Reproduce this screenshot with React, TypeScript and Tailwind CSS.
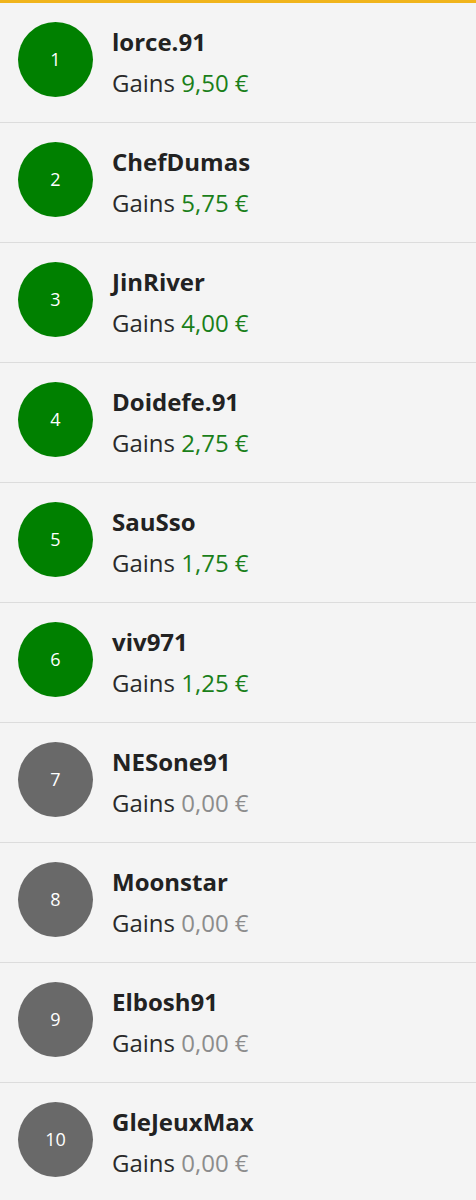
import React from "react";

type Player = {
  rank: number;
  name: string;
  gains: string;
};

const players: Player[] = [
  { rank: 1, name: "lorce.91", gains: "9,50 €" },
  { rank: 2, name: "ChefDumas", gains: "5,75 €" },
  { rank: 3, name: "JinRiver", gains: "4,00 €" },
  { rank: 4, name: "Doidefe.91", gains: "2,75 €" },
  { rank: 5, name: "SauSso", gains: "1,75 €" },
  { rank: 6, name: "viv971", gains: "1,25 €" },
  { rank: 7, name: "NESone91", gains: "0,00 €" },
  { rank: 8, name: "Moonstar", gains: "0,00 €" },
  { rank: 9, name: "Elbosh91", gains: "0,00 €" },
  { rank: 10, name: "GleJeuxMax", gains: "0,00 €" },
];

const PlayerRow: React.FC<{ item: Player }> = ({ item }) => {
  const won = item.gains !== "0,00 €";
  return (
    <div className="flex items-start h-[120px] border-b border-[#dcdcdc] px-[18px]">
      <div
        className={
          won
            ? "mt-[19px] w-[75px] h-[75px] rounded-full bg-[#008000] flex items-center justify-center text-white text-[18px] shrink-0"
            : "mt-[19px] w-[75px] h-[75px] rounded-full bg-[#696969] flex items-center justify-center text-white text-[18px] shrink-0"
        }
      >
        {item.rank}
      </div>
      <div className="ml-[19px] mt-[24px] flex flex-col">
        <span className="text-[24px] font-bold text-[#222] leading-[30px]">
          {item.name}
        </span>
        <span className="text-[24px] text-[#2a2a2a] leading-[30px] mt-[11px]">
          Gains{" "}
          <span className={won ? "text-[#1a7f1a]" : "text-[#8c8c8c]"}>
            {item.gains}
          </span>
        </span>
      </div>
    </div>
  );
};

export default function App() {
  return (
    <div
      className="w-[476px] h-[1200px] bg-[#f4f4f4] overflow-hidden border-t-[3px] border-[#f0b41c]"
      style={{ fontFamily: '"Open Sans", "Noto Sans", sans-serif' }}
    >
      {players.map((p) => (
        <PlayerRow key={p.rank} item={p} />
      ))}
    </div>
  );
}
